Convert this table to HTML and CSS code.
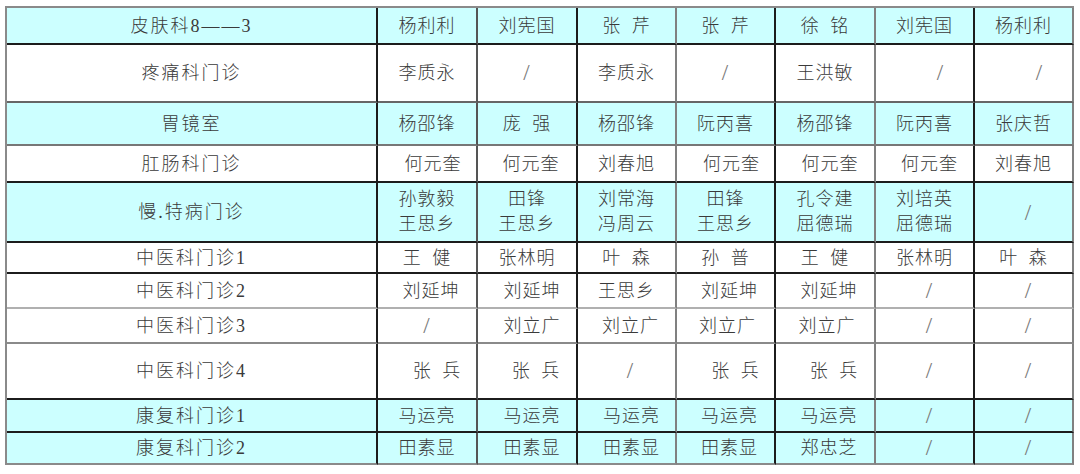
FILE: index.html
```html
<!DOCTYPE html>
<html lang="zh-CN">
<head>
<meta charset="utf-8">
<title>门诊排班表</title>
<link rel="stylesheet" href="styles.css">
</head>
<body>
<table class="sched">
  <tr class="cy h1 lg-top">
    <td class="c0">皮肤科8——3</td>
    <td class="c1">杨利利</td>
    <td class="c2">刘宪国</td>
    <td class="c3">张 芹</td>
    <td class="c4">张 芹</td>
    <td class="c5">徐 铭</td>
    <td class="c6">刘宪国</td>
    <td class="c7">杨利利</td>
  </tr>
  <tr class="h2 bg6">
    <td>疼痛科门诊</td>
    <td>李质永</td>
    <td class="sl">/</td>
    <td>李质永</td>
    <td class="sl">/</td>
    <td>王洪敏</td>
    <td class="sl o30">/</td>
    <td class="sl o30">/</td>
  </tr>
  <tr class="cy h3 bg7">
    <td>胃镜室</td>
    <td>杨邵锋</td>
    <td>庞 强</td>
    <td>杨邵锋</td>
    <td>阮丙喜</td>
    <td>杨邵锋</td>
    <td>阮丙喜</td>
    <td>张庆哲</td>
  </tr>
  <tr class="h4">
    <td>肛肠科门诊</td>
    <td class="o12">何元奎</td>
    <td class="o6">何元奎</td>
    <td>刘春旭</td>
    <td class="o12">何元奎</td>
    <td class="o10">何元奎</td>
    <td class="o8">何元奎</td>
    <td>刘春旭</td>
  </tr>
  <tr class="cy h5 two">
    <td>慢.特病门诊</td>
    <td>孙敦毅<br>王思乡</td>
    <td>田锋<br>王思乡</td>
    <td>刘常海<br>冯周云</td>
    <td>田锋<br>王思乡</td>
    <td>孔令建<br>屈德瑞</td>
    <td>刘培英<br>屈德瑞</td>
    <td class="sl o10">/</td>
  </tr>
  <tr class="h6">
    <td>中医科门诊1</td>
    <td>王 健</td>
    <td>张林明</td>
    <td>叶 森</td>
    <td>孙 普</td>
    <td>王 健</td>
    <td>张林明</td>
    <td>叶 森</td>
  </tr>
  <tr class="h7 bgl">
    <td>中医科门诊2</td>
    <td class="o6">刘延坤</td>
    <td class="o10">刘延坤</td>
    <td>王思乡</td>
    <td class="o6">刘延坤</td>
    <td class="o6">刘延坤</td>
    <td class="sl o8">/</td>
    <td class="sl o8">/</td>
  </tr>
  <tr class="h8 bg8">
    <td>中医科门诊3</td>
    <td class="sl">/</td>
    <td class="o8">刘立广</td>
    <td class="o6">刘立广</td>
    <td class="o2">刘立广</td>
    <td class="o2">刘立广</td>
    <td class="sl o8">/</td>
    <td class="sl o8">/</td>
  </tr>
  <tr class="h9">
    <td>中医科门诊4</td>
    <td class="o20">张 兵</td>
    <td class="o18">张 兵</td>
    <td class="sl o6">/</td>
    <td class="o20">张 兵</td>
    <td class="o18">张 兵</td>
    <td class="sl o8">/</td>
    <td class="sl o8">/</td>
  </tr>
  <tr class="cy h10">
    <td>康复科门诊1</td>
    <td>马运亮</td>
    <td class="o8">马运亮</td>
    <td class="o8">马运亮</td>
    <td class="o6">马运亮</td>
    <td class="o6">马运亮</td>
    <td class="sl o8">/</td>
    <td class="sl o8">/</td>
  </tr>
  <tr class="cy h11 bg8">
    <td>康复科门诊2</td>
    <td>田素显</td>
    <td class="o8">田素显</td>
    <td class="o8">田素显</td>
    <td class="o6">田素显</td>
    <td class="o6">郑忠芝</td>
    <td class="sl o8">/</td>
    <td class="sl o8">/</td>
  </tr>
</table>
</body>
</html>
```

FILE: styles.css
```css
html, body {
  margin: 0;
  padding: 0;
  background: #ffffff;
}

.sched {
  margin: 6px 0 0 5px;
  width: 1069px;
  table-layout: fixed;
  border-collapse: separate;
  border-spacing: 0;
  border-left: 2px solid #8a8a8a;
  border-top: 2px solid #8a8a8a;
  font-family: "Liberation Serif", "Noto Sans CJK SC", serif;
  font-size: 18px;
  font-weight: 300;
  color: #3a3a3a;
}

.sched td {
  box-sizing: border-box;
  padding: 0;
  text-align: center;
  vertical-align: middle;
  border-right: 2px solid #1c1c1c;
  border-bottom: 2px solid #1c1c1c;
  white-space: nowrap;
  word-spacing: 5px;
  letter-spacing: 1px;
  line-height: 22px;
}

.sched td:first-child {
  letter-spacing: 2px;
}

.sched td:nth-child(2) { border-right-color: #555555; }
.sched td:nth-child(4),
.sched td:nth-child(6),
.sched td:nth-child(8) { border-right-color: #808080; }

.c0 { width: 371px; }
.c1, .c2, .c5 { width: 100px; }
.c3, .c4, .c6, .c7 { width: 99px; }

.cy td { background: #ccffff; }

.h1 { height: 37px; }
.h2 { height: 58px; }
.h3 { height: 43px; }
.h4 { height: 37px; }
.h5 { height: 60px; }
.h6 { height: 31px; }
.h7 { height: 35px; }
.h8 { height: 35px; }
.h9 { height: 56px; }
.h10 { height: 33px; }
.h11 { height: 32px; }

.bg6 td { border-bottom-color: #666666; }
.bg7 td { border-bottom-color: #777777; }
.bgl td { border-bottom-color: #1c1c1c; }
.h8 td { border-bottom-color: #8a8a8a; }
.h7 td { border-bottom-color: #b0b0b0; }
.h11 td { border-bottom-color: #8a8a8a; }

.two td { line-height: 25px; }

.sl {
  color: #7a7a7a;
  font-size: 23px;
  font-weight: 400;
}

.o2 { padding-left: 4px !important; }
.o6 { padding-left: 8px !important; }
.o8 { padding-left: 10px !important; }
.o10 { padding-left: 10px !important; }
.o12 { padding-left: 12px !important; }
.o18 { padding-left: 18px !important; }
.o20 { padding-left: 20px !important; }
.o30 { padding-left: 32px !important; }
```
